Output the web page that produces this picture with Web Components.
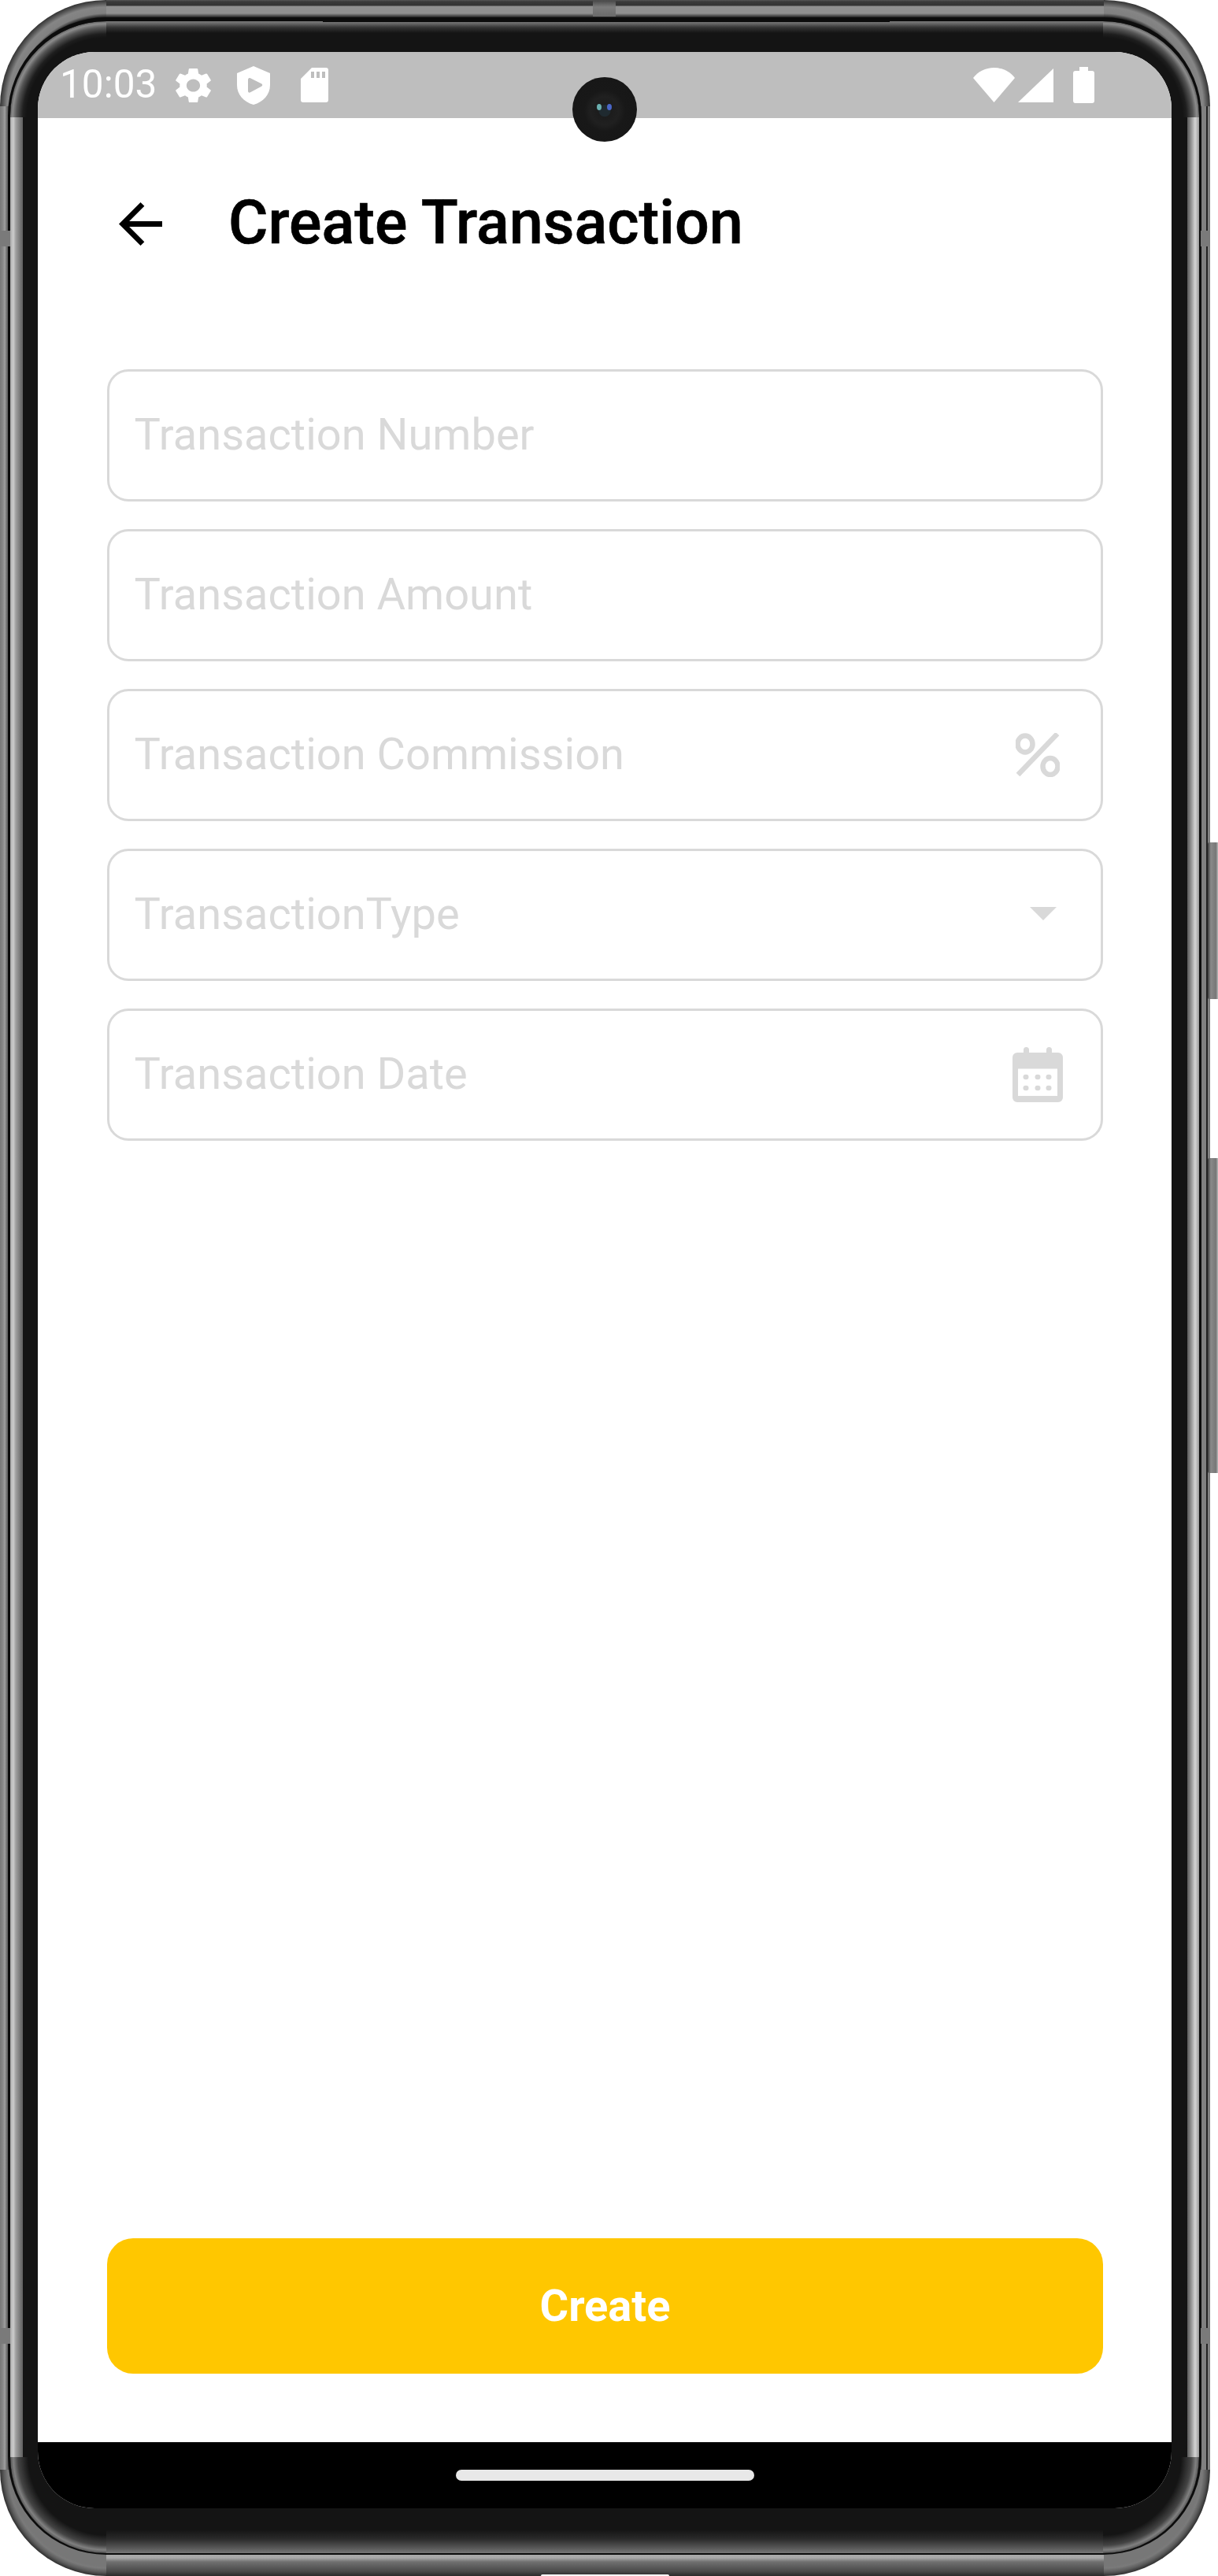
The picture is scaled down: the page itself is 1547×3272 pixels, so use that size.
<!DOCTYPE html>
<html lang="en">
<head>
<meta charset="utf-8">
<title>Create Transaction</title>
<style>
  html, body { margin: 0; background: #fff; }
  body { font-family: Roboto, "Liberation Sans", sans-serif; }
</style>
</head>
<body>
<device-frame>
  <status-bar time="10:03"></status-bar>
  <app-bar>Create Transaction</app-bar>
  <transaction-form>
    <form-field>Transaction Number</form-field>
    <form-field>Transaction Amount</form-field>
    <form-field>Transaction Commission
      <svg slot="icon" width="56" height="56" viewBox="0 0 56 56" fill="none" stroke="#d9d9d9">
        <ellipse cx="12" cy="14" rx="9.500" ry="10.500" stroke-width="6.500"/>
        <ellipse cx="44" cy="42.500" rx="9.500" ry="10.500" stroke-width="6.500"/>
        <path d="M53 1 3 53" stroke-width="6.500"/>
      </svg>
    </form-field>
    <form-field>TransactionType
      <svg slot="icon" width="34" height="17" viewBox="0 0 34 17" style="margin:-3px 4px 0 0"><path d="M0 0h34L17 17z" fill="#d9d9d9"/></svg>
    </form-field>
    <form-field>Transaction Date
      <svg slot="icon" width="64" height="70" viewBox="0 0 64 70" style="margin-right:-4px">
        <path fill="#d9d9d9" fill-rule="evenodd" d="M14 3.500a3.500 3.500 0 0 1 7 0V7h22V3.500a3.500 3.500 0 0 1 7 0V7h8a6 6 0 0 1 6 6v51a6 6 0 0 1-6 6H6a6 6 0 0 1-6-6V13a6 6 0 0 1 6-6h8zM7 27.500V62h50V27.500z"/>
        <g fill="#d9d9d9"><ellipse cx="17" cy="38" rx="3.500" ry="3.200"/><ellipse cx="32" cy="38" rx="3.500" ry="3.200"/><ellipse cx="46" cy="38" rx="3.500" ry="3.200"/><ellipse cx="17" cy="52" rx="3.500" ry="3.200"/><ellipse cx="32" cy="52" rx="3.500" ry="3.200"/><ellipse cx="46" cy="52" rx="3.500" ry="3.200"/></g>
      </svg>
    </form-field>
  </transaction-form>
  <action-button>Create</action-button>
  <nav-bar></nav-bar>
</device-frame>

<script>
class DeviceFrame extends HTMLElement {
  constructor() {
    super();
    this.attachShadow({ mode: 'open' }).innerHTML = `
      <style>
        :host { display: block; position: relative; width: 1547px; height: 3272px; box-sizing: border-box; }
        .shell {
          box-sizing: border-box; width: 1537px; height: 3272px; border-radius: 135px;
          padding: 22px 11px 27px 10px;
          background-color: #555;
          background-repeat: no-repeat;
          background-image:
            radial-gradient(circle at 100% 100%, #222 0 113px, #808080 118px, #858585 126px, #555 131px, #333 135px),
            radial-gradient(circle at 0 100%, #222 0 113px, #808080 118px, #858585 126px, #555 131px, #333 135px),
            radial-gradient(circle at 100% 0, #777 0 122px, #7a7a7a 125px, #5c5c5c 130px, #2e2e2e 135px),
            radial-gradient(circle at 0 0, #777 0 122px, #7a7a7a 125px, #5c5c5c 130px, #2e2e2e 135px),
            linear-gradient(to bottom, #555 0, #3a3a3a 2px, #333 7px, #909090 8px, #909090 17px, #222 22px),
            linear-gradient(to top, #2a2a2a 0, #4a4a4a 6px, #707070 18px, #a8a8a8 23px, #aaa 26px),
            linear-gradient(to right, #777 0, #8a8a8a 4px, #a0a0a0 6px, #666 9px, #666 10px),
            linear-gradient(to left, #777 0, #888 3px, #222 3px, #222 5px, #808080 5px, #808080 11px);
          background-size:
            135px 135px, 135px 135px, 135px 135px, 135px 135px,
            calc(100% - 270px) 22px, calc(100% - 270px) 27px,
            10px calc(100% - 270px), 11px calc(100% - 270px);
          background-position:
            0 0, 100% 0, 0 100%, 100% 100%,
            135px 0, 135px 100%,
            0 135px, 100% 135px;
        }
        .rim {
          box-sizing: border-box; height: 100%; border-style: solid; border-color: #0c0c0c;
          border-width: 5px 3px 2px 3px; border-radius: 125px;
          padding: 39px 35px 57px 35px;
          background-color: #141414;
          background-origin: padding-box; background-clip: padding-box;
          background-repeat: no-repeat;
          background-image:
            radial-gradient(circle at 100% 100%, #141414 0 101px, #1e1e1e 106px, #555 114px, #8c8c8c 119px, #666 122px),
            radial-gradient(circle at 0 100%, #141414 0 101px, #1e1e1e 106px, #555 114px, #8c8c8c 119px, #666 122px),
            radial-gradient(circle at 100% 0, #141414 0 99px, #444 112px, #808080 118px, #555 122px),
            radial-gradient(circle at 0 0, #141414 0 99px, #444 112px, #808080 118px, #555 122px),
            linear-gradient(to bottom, #7a7a7a 0, #666 3px, #333 8px, #141414 15px),
            linear-gradient(to top, #777 0, #5a5a5a 6px, #2a2a2a 18px, #141414 30px),
            linear-gradient(to right, #aaa 0, #cdcdcd 4px, #a0a0a0 7px, #666 15px, #666 16px, #141414 16px),
            linear-gradient(to left, #999 0, #d4d4d4 5px, #888 11px, #5a5a5a 15px, #141414 15px);
          background-size:
            122px 122px, 122px 122px, 122px 122px, 122px 122px,
            calc(100% - 244px) 40px, calc(100% - 244px) 40px,
            16px calc(100% - 244px), 15px calc(100% - 244px);
          background-position:
            0 0, 100% 0, 0 100%, 100% 100%,
            122px 0, 122px 100%,
            0 122px, 100% 122px;
        }
        .screen {
          position: relative; box-sizing: border-box; width: 1440px; height: 3120px;
          border-radius: 72px; overflow: hidden; background: #fff;
          display: flex; flex-direction: column;
        }
        .camera {
          position: absolute; top: 32px; left: 679px; width: 82px; height: 82px; border-radius: 50%;
          background: radial-gradient(circle at 50% 52%, #1f2a30 0 7px, #1c1c1c 8px, #202020 18px, #181818 26px, #161616 100%);
        }
        .lens { position: absolute; top: 34px; width: 6px; height: 8px; border-radius: 50%; filter: blur(.6px); }
        .lens.a { left: 31px; background: #6bb0b0; }
        .lens.b { left: 44px; background: #4a66c8; }
        .btn { position: absolute; right: 0; width: 13px; border-radius: 2px 0 0 2px;
          background: linear-gradient(to right, #3a3a3a, #8a8a8a 30%, #777 80%, #bbb); }
        .top-btn { position: absolute; top: 1px; left: 753px; width: 29px; height: 20px; background: linear-gradient(#4a4a4a, #7c7c7c 40%, #6a6a6a); }
        .band { position: absolute; background: #7a7a7a; height: 20px; }
        .seam { position: absolute; top: 25px; left: 410px; width: 720px; height: 3px; background: #0c0c0c; }
        .notch { position: absolute; left: 687px; bottom: 0; width: 163px; height: 2px; border-radius: 2px 2px 0 0; background: #fff; }
      </style>
      <div class="shell">
        <div class="rim">
          <div class="screen">
            <slot></slot>
            <div class="camera"><i class="lens a"></i><i class="lens b"></i></div>
          </div>
        </div>
      </div>
      <div class="seam"></div>
      <div class="top-btn"></div>
      <div class="band" style="left:0;top:293px;width:13px"></div>
      <div class="band" style="left:0;top:2957px;width:13px"></div>
      <div class="band" style="right:10px;top:2957px;width:12px"></div>
      <div class="band" style="right:10px;top:293px;width:12px"></div>
      <div class="notch"></div>
      <div class="btn" style="top:1070px;height:199px"></div>
      <div class="btn" style="top:1471px;height:400px"></div>
    `;
  }
}
customElements.define('device-frame', DeviceFrame);

class StatusBar extends HTMLElement {
  constructor() {
    super();
    this.attachShadow({ mode: 'open' }).innerHTML = `
      <style>
        :host { display: flex; flex: none; align-items: center; height: 84px; padding: 0 98px 0 28px; box-sizing: border-box; background: #bebebe; color: #fff; }
        .time { font: 400 49.500px/1 Roboto, sans-serif; width: 147px; }
        svg { display: block; fill: #fff; }
        .gap { flex: 1; }
      </style>
      <span class="time"></span>
      <svg width="45" height="45" viewBox="2.6 2 18.800 20" preserveAspectRatio="none"><path d="M19.140 12.940c.04-.3.06-.61.06-.94 0-.32-.02-.64-.07-.94l2.030-1.580c.18-.14.23-.41.12-.61l-1.920-3.320c-.12-.22-.37-.29-.59-.22l-2.390.96c-.5-.38-1.030-.7-1.620-.94l-.36-2.540c-.04-.24-.24-.41-.48-.41h-3.840c-.24 0-.43.17-.47.41l-.36 2.540c-.59.24-1.130.57-1.620.94l-2.390-.96c-.22-.08-.47 0-.59.22L2.740 8.870c-.12.21-.08.47.12.61l2.030 1.580c-.05.3-.09.63-.09.94s.02.64.07.94l-2.030 1.580c-.18.14-.23.41-.12.61l1.920 3.320c.12.22.37.29.59.22l2.390-.96c.5.38 1.030.7 1.620.94l.36 2.540c.05.24.24.41.48.41h3.840c.24 0 .44-.17.47-.41l.36-2.540c.59-.24 1.130-.56 1.620-.94l2.390.96c.22.08.47 0 .59-.22l1.920-3.320c.12-.22.07-.47-.12-.61l-2.010-1.580zM12 15.600c-1.980 0-3.600-1.620-3.600-3.600s1.620-3.600 3.600-3.600 3.600 1.620 3.600 3.600-1.620 3.600-3.600 3.600z"/></svg>
      <svg style="margin-left:33px" width="42" height="49" viewBox="0 0 42 49"><path fill-rule="evenodd" d="M21 0 42 9v15c0 12-8.500 21.500-21 25C8.500 45.500 0 36 0 24V9zM14 17.500v14c0 2 1.500 2.700 3 1.800l14-7.500c1.700-.9 1.700-2.700 0-3.600l-14-7c-1.500-.8-3 0-3 2.300z"/></svg>
      <svg style="margin-left:39px" width="35" height="44" viewBox="0 0 35 44"><path fill-rule="evenodd" d="M14 0h18a3 3 0 0 1 3 3v38a3 3 0 0 1-3 3H3a3 3 0 0 1-3-3V14zM13 5v8h4V5zm7 0v8h4V5zm7 0v8h4V5z"/></svg>
      <span class="gap"></span>
      <svg width="53" height="44" viewBox="0 0 53 44"><path d="M0 13C6 5 16 0 26.500 0S47 5 53 13L26.500 44z"/></svg>
      <svg style="margin-left:4px" width="45" height="43" viewBox="0 0 45 43"><path d="M45 0v43H0z"/></svg>
      <svg style="margin-left:25px" width="27" height="46" viewBox="0 0 27 46"><path d="M8 0h11v5h5a3 3 0 0 1 3 3v35a3 3 0 0 1-3 3H3a3 3 0 0 1-3-3V8a3 3 0 0 1 3-3h5z"/></svg>
    `;
    this.shadowRoot.querySelector('.time').textContent = this.getAttribute('time');
  }
}
customElements.define('status-bar', StatusBar);

class AppBar extends HTMLElement {
  constructor() {
    super();
    this.attachShadow({ mode: 'open' }).innerHTML = `
      <style>
        :host { display: flex; flex: none; align-items: center; gap: 84px; height: 268px; padding-left: 103px; box-sizing: border-box; }
        svg { flex: none; display: block; }
        h1 { margin: -3px 0 0; font: 500 77.300px/1 Roboto, sans-serif; color: #000; -webkit-text-stroke: .6px #000; }
      </style>
      <svg width="55" height="55" viewBox="4 4 16 16"><path d="M20 11H7.830l5.590-5.590L12 4l-8 8 8 8 1.410-1.410L7.830 13H20v-2z"/></svg>
      <h1><slot></slot></h1>
    `;
  }
}
customElements.define('app-bar', AppBar);

class TransactionForm extends HTMLElement {
  constructor() {
    super();
    this.attachShadow({ mode: 'open' }).innerHTML = `
      <style>
        :host { display: flex; flex: 1; flex-direction: column; gap: 35px; padding: 51px 87px 0 88px; box-sizing: border-box; }
      </style>
      <slot></slot>
    `;
  }
}
customElements.define('transaction-form', TransactionForm);

class FormField extends HTMLElement {
  constructor() {
    super();
    this.attachShadow({ mode: 'open' }).innerHTML = `
      <style>
        :host {
          display: flex; align-items: center; justify-content: space-between; height: 168px; box-sizing: border-box;
          padding: 0 52.500px 0 31.500px; border: 3.500px solid #d9d9d9; border-radius: 27px;
          font: 400 56px/1 Roboto, sans-serif; color: #d9d9d9; white-space: nowrap;
        }
        .label { position: relative; top: -1px; }
        ::slotted(svg) { display: block; flex: none; }
      </style>
      <span class="label"><slot></slot></span>
      <slot name="icon"></slot>
    `;
  }
}
customElements.define('form-field', FormField);

class ActionButton extends HTMLElement {
  constructor() {
    super();
    this.attachShadow({ mode: 'open' }).innerHTML = `
      <style>
        :host {
          display: flex; flex: none; align-items: center; justify-content: center;
          height: 172px; margin: 0 87px 87px 88px; border-radius: 33px;
          background: #ffc700; color: #fff; font: 700 56px/1 Roboto, sans-serif;
        }
      </style>
      <slot></slot>
    `;
  }
}
customElements.define('action-button', ActionButton);

class NavBar extends HTMLElement {
  constructor() {
    super();
    this.attachShadow({ mode: 'open' }).innerHTML = `
      <style>
        :host { display: flex; flex: none; justify-content: center; height: 84px; padding-top: 35px; box-sizing: border-box; background: #000; }
        .pill { width: 379px; height: 14px; border-radius: 7px; background: #e8e8e8; }
      </style>
      <div class="pill"></div>
    `;
  }
}
customElements.define('nav-bar', NavBar);
</script>
</body>
</html>
